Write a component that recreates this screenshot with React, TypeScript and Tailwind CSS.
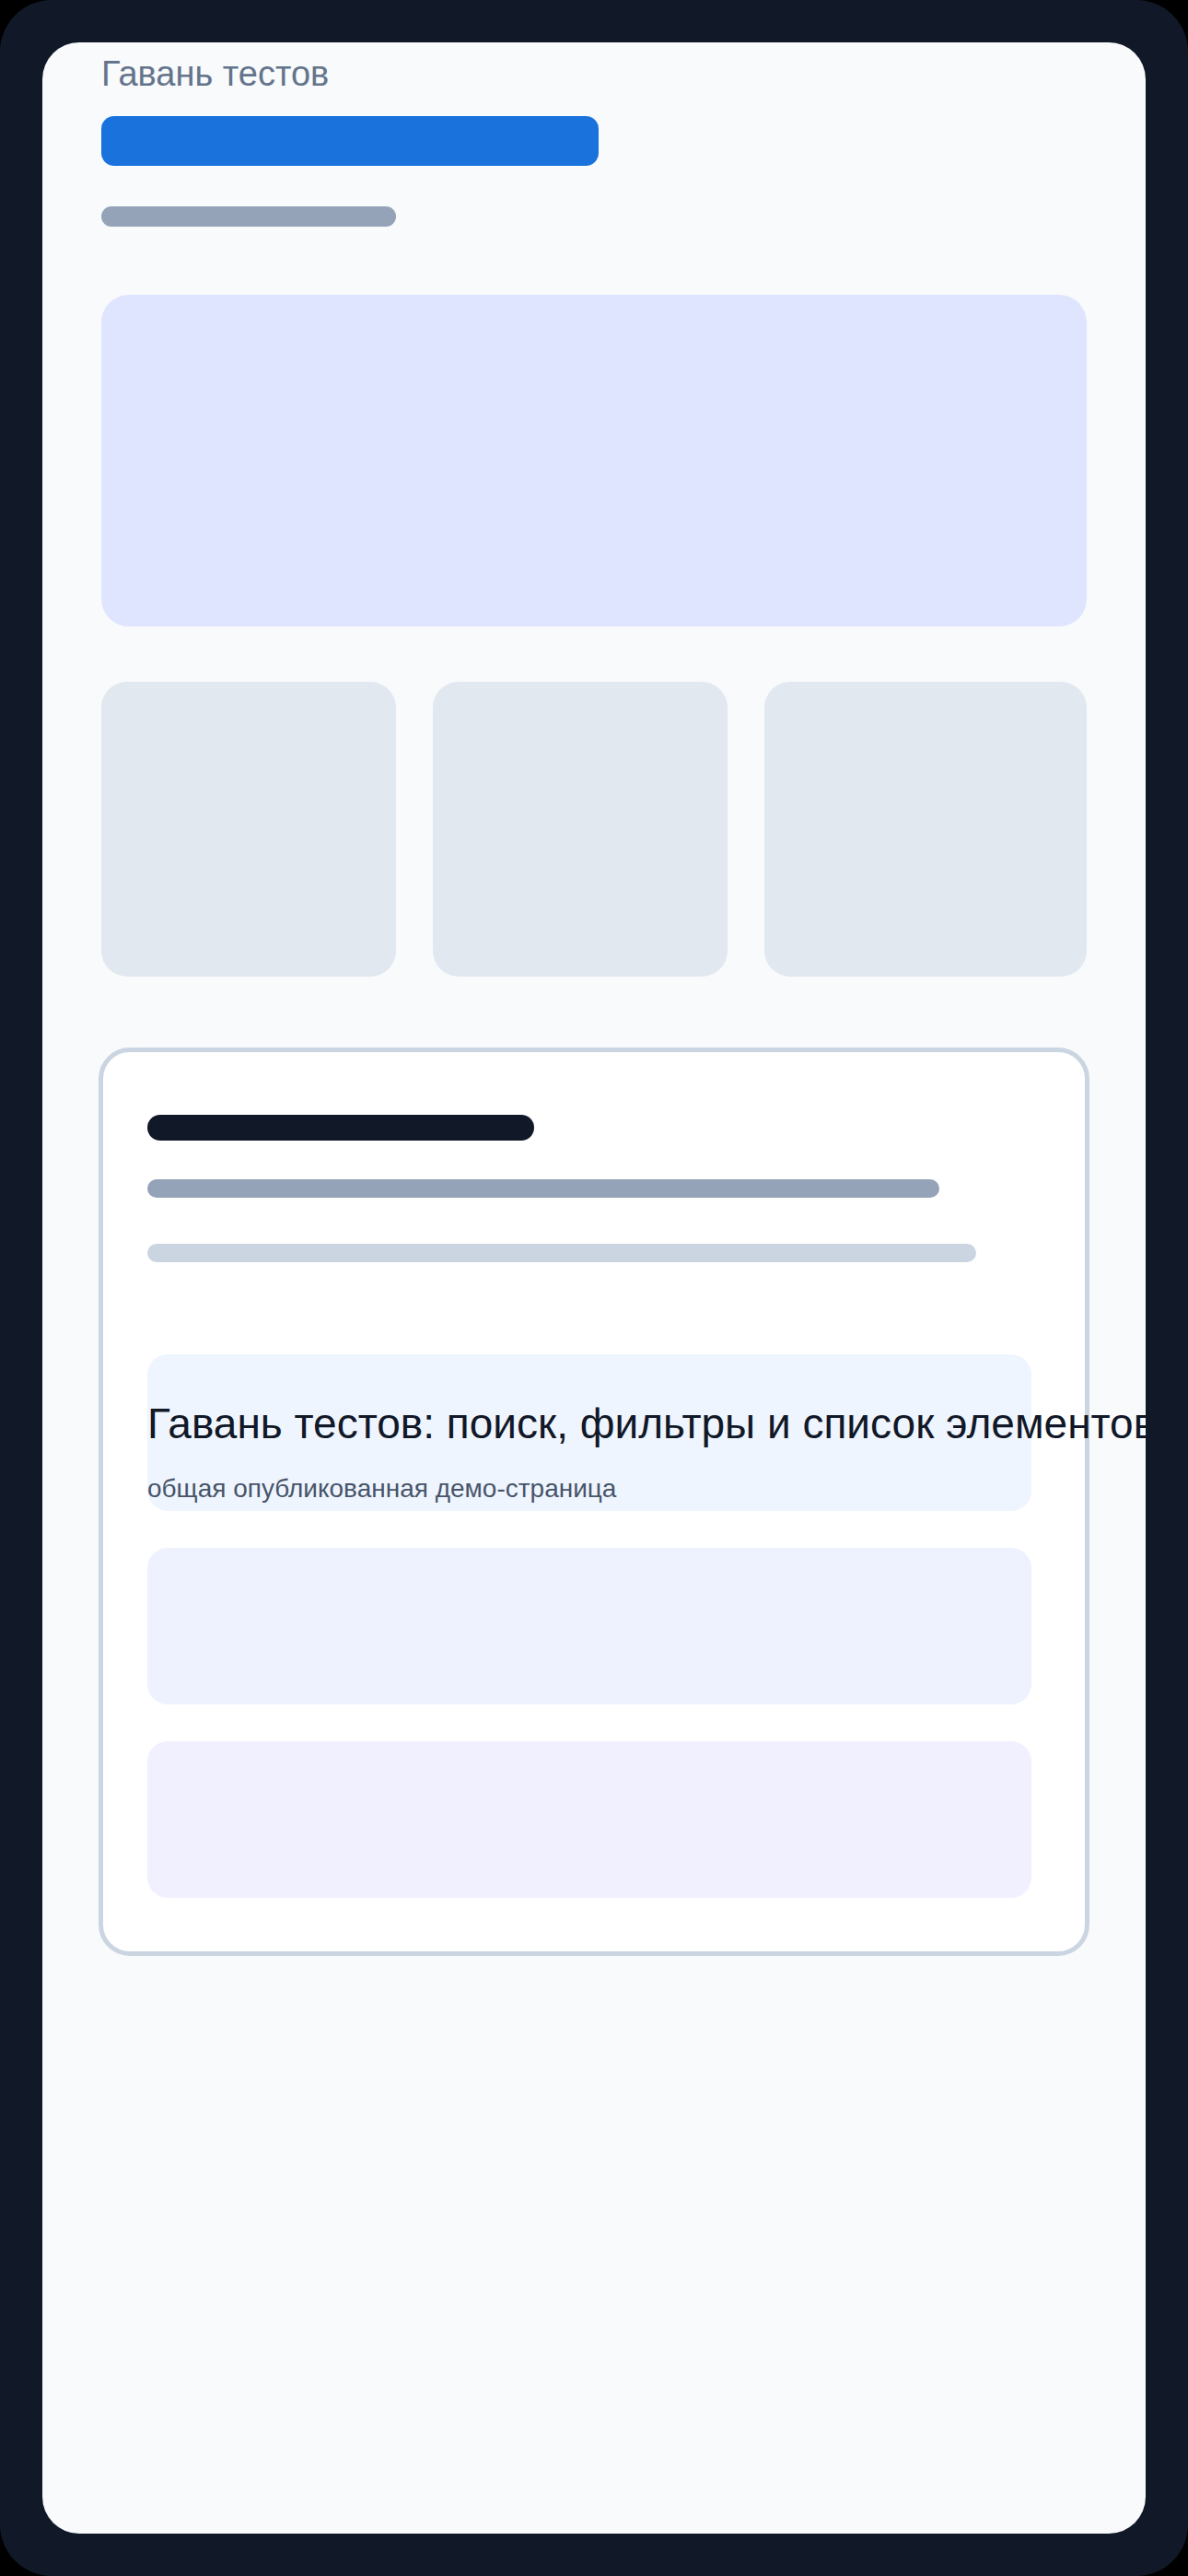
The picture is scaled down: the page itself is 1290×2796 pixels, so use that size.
import React from "react";

export default function App() {
  return (
    <div className="w-[1290px] h-[2796px] bg-black" style={{ fontFamily: '"Liberation Sans", Arial, sans-serif' }}>
      <div className="h-full rounded-[56px] bg-[#111827] p-[46px]">
        <div className="h-full overflow-hidden rounded-[40px] bg-[#f8fafc] px-[64px] pt-[12px]">
          <div className="text-[38px] leading-[44px] text-[#64748b] whitespace-nowrap">Гавань тестов</div>
          <div className="mt-[24px] h-[54px] w-[540px] rounded-[14px] bg-[#1a73dd]" />
          <div className="mt-[44px] h-[22px] w-[320px] rounded-full bg-[#94a3b8]" />

          <div className="mt-[74px] h-[360px] w-full rounded-[30px] bg-[#e0e5ff]" />

          <div className="mt-[60px] flex gap-[40px]">
            <div className="h-[320px] w-[320px] rounded-[28px] bg-[#e2e8f0]" />
            <div className="h-[320px] w-[320px] rounded-[28px] bg-[#e2e8f0]" />
            <div className="h-[320px] flex-1 rounded-[28px] bg-[#e2e8f0]" />
          </div>

          <div className="-mx-[3px] mt-[77px] rounded-[34px] border-[5px] border-[#cbd5e1] bg-white pl-[48px] pt-[68px] pb-[58px]">
            <div className="h-[28px] w-[420px] rounded-full bg-[#111827]" />
            <div className="mt-[42px] h-[20px] w-[860px] rounded-full bg-[#94a3b8]" />
            <div className="mt-[50px] h-[20px] w-[900px] rounded-full bg-[#cbd5e1]" />

            <div className="mt-[100px] h-[170px] w-[960px] rounded-[22px] bg-[#eff5ff] pt-[49px]">
              <div className="whitespace-nowrap text-[46px] leading-[53px] text-[#111827]">
                Гавань тестов: поиск, фильтры и список элементов
              </div>
              <div className="mt-[28px] whitespace-nowrap text-[28px] leading-[32px] text-[#475569]">
                общая опубликованная демо-страница
              </div>
            </div>
            <div className="mt-[40px] h-[170px] w-[960px] rounded-[22px] bg-[#eef2ff]" />
            <div className="mt-[40px] h-[170px] w-[960px] rounded-[22px] bg-[#f1f0fe]" />
          </div>
        </div>
      </div>
    </div>
  );
}
